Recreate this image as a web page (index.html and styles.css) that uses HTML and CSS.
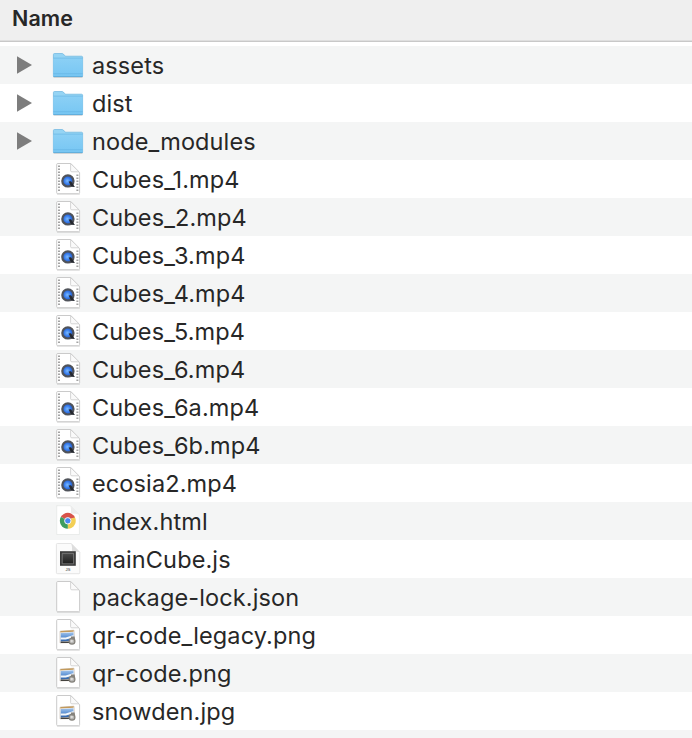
FILE: index.html
```
<!DOCTYPE html>
<html lang="en">
<head>
<meta charset="utf-8">
<title>Files</title>
<link rel="stylesheet" href="styles.css">
</head>
<body>
<svg class="defs" width="0" height="0" aria-hidden="true">
  <defs>
    <linearGradient id="folder-fill" x1="0" y1="0" x2="0" y2="1"><stop offset="0" stop-color="#8bd0f5"/><stop offset="1" stop-color="#77c6f3"/></linearGradient>
    <radialGradient id="lens" cx=".45" cy=".5" r=".6"><stop offset="0" stop-color="#7dbcff"/><stop offset=".5" stop-color="#3478ea"/><stop offset="1" stop-color="#1e469a"/></radialGradient>
    <linearGradient id="chip-fill" x1="0" y1="0" x2="0" y2="1"><stop offset="0" stop-color="#4c4c4c"/><stop offset="1" stop-color="#1d1d1d"/></linearGradient>
    <linearGradient id="sky" x1="0" y1="0" x2="0" y2="1"><stop offset="0" stop-color="#a4c4ea"/><stop offset=".4" stop-color="#6d9edb"/><stop offset="1" stop-color="#2f62a8"/></linearGradient>
    <symbol id="folder" viewBox="0 0 40 38">
      <path d="M5.5 31.3h29" stroke="#000" stroke-opacity=".14" stroke-width="1.2"/>
      <path d="M5.4 30V8.6q0-1.1 1.1-1.1h7.6q.8 0 1.3.6l1.3 1.5q.5.6 1.3.6h15.5q1.1 0 1.1 1.1V30q0 .6-.6.6H6q-.6 0-.6-.6z" fill="#95d4f4" stroke="#6bb5df" stroke-width=".7"/>
      <path d="M5.4 12.3h29.2V30q0 .6-.6.6H6q-.6 0-.6-.6z" fill="url(#folder-fill)"/>
      <path d="M5.4 12.1h29.2M5.4 27.7h29.2" stroke="#65b5e4" stroke-width=".7"/>
      <path d="M5.4 30.5h29.2" stroke="#5aa9d8" stroke-width=".8"/>
    </symbol>
    <symbol id="page" viewBox="0 0 40 38">
      <path d="M9 34.3h23" stroke="#000" stroke-opacity=".1" stroke-width="1"/>
      <path d="M9.7 3.5h13.1l8.8 9.2v20q0 1-1 1H9.7q-1 0-1-1V4.5q0-1 1-1z" fill="#fff" stroke="#c4c4c4" stroke-width=".9"/>
      <path d="M22.6 3.6v7q0 1.2 1.2 1.2h7.3z" fill="#fafafa" stroke="#cacaca" stroke-width=".8"/>
    </symbol>
    <symbol id="video" viewBox="0 0 40 38">
      <use href="#page"/>
      <path d="M11 5.5v27M29.4 14.5v18" stroke="#a3a3a3" stroke-width="2" stroke-dasharray="1.5 1.5"/>
      <circle cx="19.9" cy="20.9" r="5.6" fill="url(#lens)" stroke="#50535a" stroke-width="2.2"/>
      <path d="M20.6 21.6l2.4-.3 3.9 5.8-3.6-.3z" fill="#25282f"/>
    </symbol>
    <symbol id="chrome" viewBox="0 0 40 38">
      <path d="M8.7 3.7h13.7l9 9v19.8H8.7z" fill="#fff" stroke="#e2e5e4" stroke-width=".7"/>
      <path d="M22.4 3.7q.8 3 .6 7.8 4.4-.2 8.4 1.2z" fill="#ececec"/>
      <g transform="translate(-.2 -1.7)">
        <path d="M20 20.5L13.1 16.5A8 8 0 0 1 26.9 16.5z" fill="#d8534a"/>
        <path d="M20 20.5L26.9 16.5A8 8 0 0 1 20 28.5z" fill="#f3cf55"/>
        <path d="M20 20.5L20 28.5A8 8 0 0 1 13.1 16.5z" fill="#3f9d60"/>
        <path d="M20 17h6.7" stroke="#d8534a"/>
        <circle cx="20" cy="20.5" r="3.2" fill="#4a8af4" stroke="#f5f5f5" stroke-width="1"/>
      </g>
    </symbol>
    <symbol id="script" viewBox="0 0 40 38">
      <path d="M9.3 3.5h14l8.5 8.7v20.6q0 .9-.9.9H9.3q-.9 0-.9-.9V4.4q0-.9.9-.9z" fill="#fbfbfb" stroke="#dedede" stroke-width=".8"/>
      <path d="M23.3 3.5q1 3 .8 7.8 4 0 7.7.9z" fill="#ddd"/>
      <path d="M12 11.2h15.8v14.6H12z" fill="#3a3a3a"/>
      <path d="M14.2 13.3h11.4v10.5H14.2z" fill="url(#chip-fill)" stroke="#8d8d8d" stroke-width=".7"/>
      <text x="20" y="31.4" class="badge">JS</text>
    </symbol>
    <symbol id="image" viewBox="0 0 40 38">
      <use href="#page"/>
      <path d="M12 15.2l14-1 .7 12.3-14.7.4z" fill="#fff" stroke="#b6a796" stroke-width=".5"/>
      <path d="M12.4 15l13.2-.8v1.5l-13.2.8z" fill="#c39a5c"/>
      <path d="M12.7 17l12.8-.8v8.6l-12.8.6z" fill="url(#sky)"/>
      <path d="M12.7 21.6l5-.2 7.8-2.4v2.4l-7.8 2-5 .2z" fill="#f2f6fa"/>
      <path d="M12.7 25.5h10v1.5h-10z" fill="#45433f"/>
      <circle cx="24" cy="25.2" r="2.9" fill="#b6b5b2" stroke="#83807a" stroke-width="1.2"/>
      <path d="M22.8 20.6l3.8-.2.6 3-4 .2z" fill="#85827c"/>
      <circle cx="23.7" cy="25" r="1.2" fill="#dedddb"/>
    </symbol>
  </defs>
</svg>
<header class="header">Name</header>
<main class="list" id="list"></main>
<script src="files.js"></script>
</body>
</html>
```
FILE: styles.css
```
body {
  margin: 0;
  height: 738px;
  overflow: hidden;
  display: flex;
  flex-direction: column;
  background: #fff;
  color: #272727;
  font-family: Inter, "Liberation Sans", sans-serif;
}
.defs { position: absolute; }
.header {
  box-sizing: border-box;
  flex: none;
  height: 42px;
  padding-left: 12px;
  border-bottom: 1px solid #c8c8c8;
  box-shadow: inset 0 -1px #dedede;
  background: #efefef;
  font-size: 21.5px;
  font-weight: 600;
  letter-spacing: .1px;
  line-height: 37px;
}
.list { padding-top: 4px; }
.row {
  display: flex;
  align-items: center;
  height: 38px;
  padding-left: 17px;
}
.row:nth-child(odd) { background: #f4f5f5; }
.arrow { width: 15px; height: 18px; margin-right: 16px; }
.arrow path { fill: #7d7d7d; }
.icon { width: 40px; height: 38px; }
.name {
  margin-left: 4px;
  padding-top: 2px;
  font-size: 23.5px;
  letter-spacing: .12px;
  line-height: 36px;
  white-space: pre;
}
.badge { font: 700 4px "Liberation Sans", sans-serif; text-anchor: middle; fill: #777; }
```
FILE: files.js
```
const files = [
  ['assets', 'folder'], ['dist', 'folder'], ['node_modules', 'folder'],
  ['Cubes_1.mp4', 'video'], ['Cubes_2.mp4', 'video'], ['Cubes_3.mp4', 'video'],
  ['Cubes_4.mp4', 'video'], ['Cubes_5.mp4', 'video'], ['Cubes_6.mp4', 'video'],
  ['Cubes_6a.mp4', 'video'], ['Cubes_6b.mp4', 'video'], ['ecosia2.mp4', 'video'],
  ['index.html', 'chrome'], ['mainCube.js', 'script'], ['package-lock.json', 'page'],
  ['qr-code_legacy.png', 'image'], ['qr-code.png', 'image'], ['snowden.jpg', 'image']
];
document.getElementById('list').innerHTML = files.map(([name, icon]) =>
  `<div class="row"><svg class="arrow" viewBox="0 0 15 18">${icon === 'folder' ? '<path d="M0 .2L15 9 0 17.8z"/>' : ''}</svg>` +
  `<svg class="icon"><use href="#${icon}"/></svg><span class="name">${name}</span></div>`
).join('') + '<div class="row"></div>';
```
